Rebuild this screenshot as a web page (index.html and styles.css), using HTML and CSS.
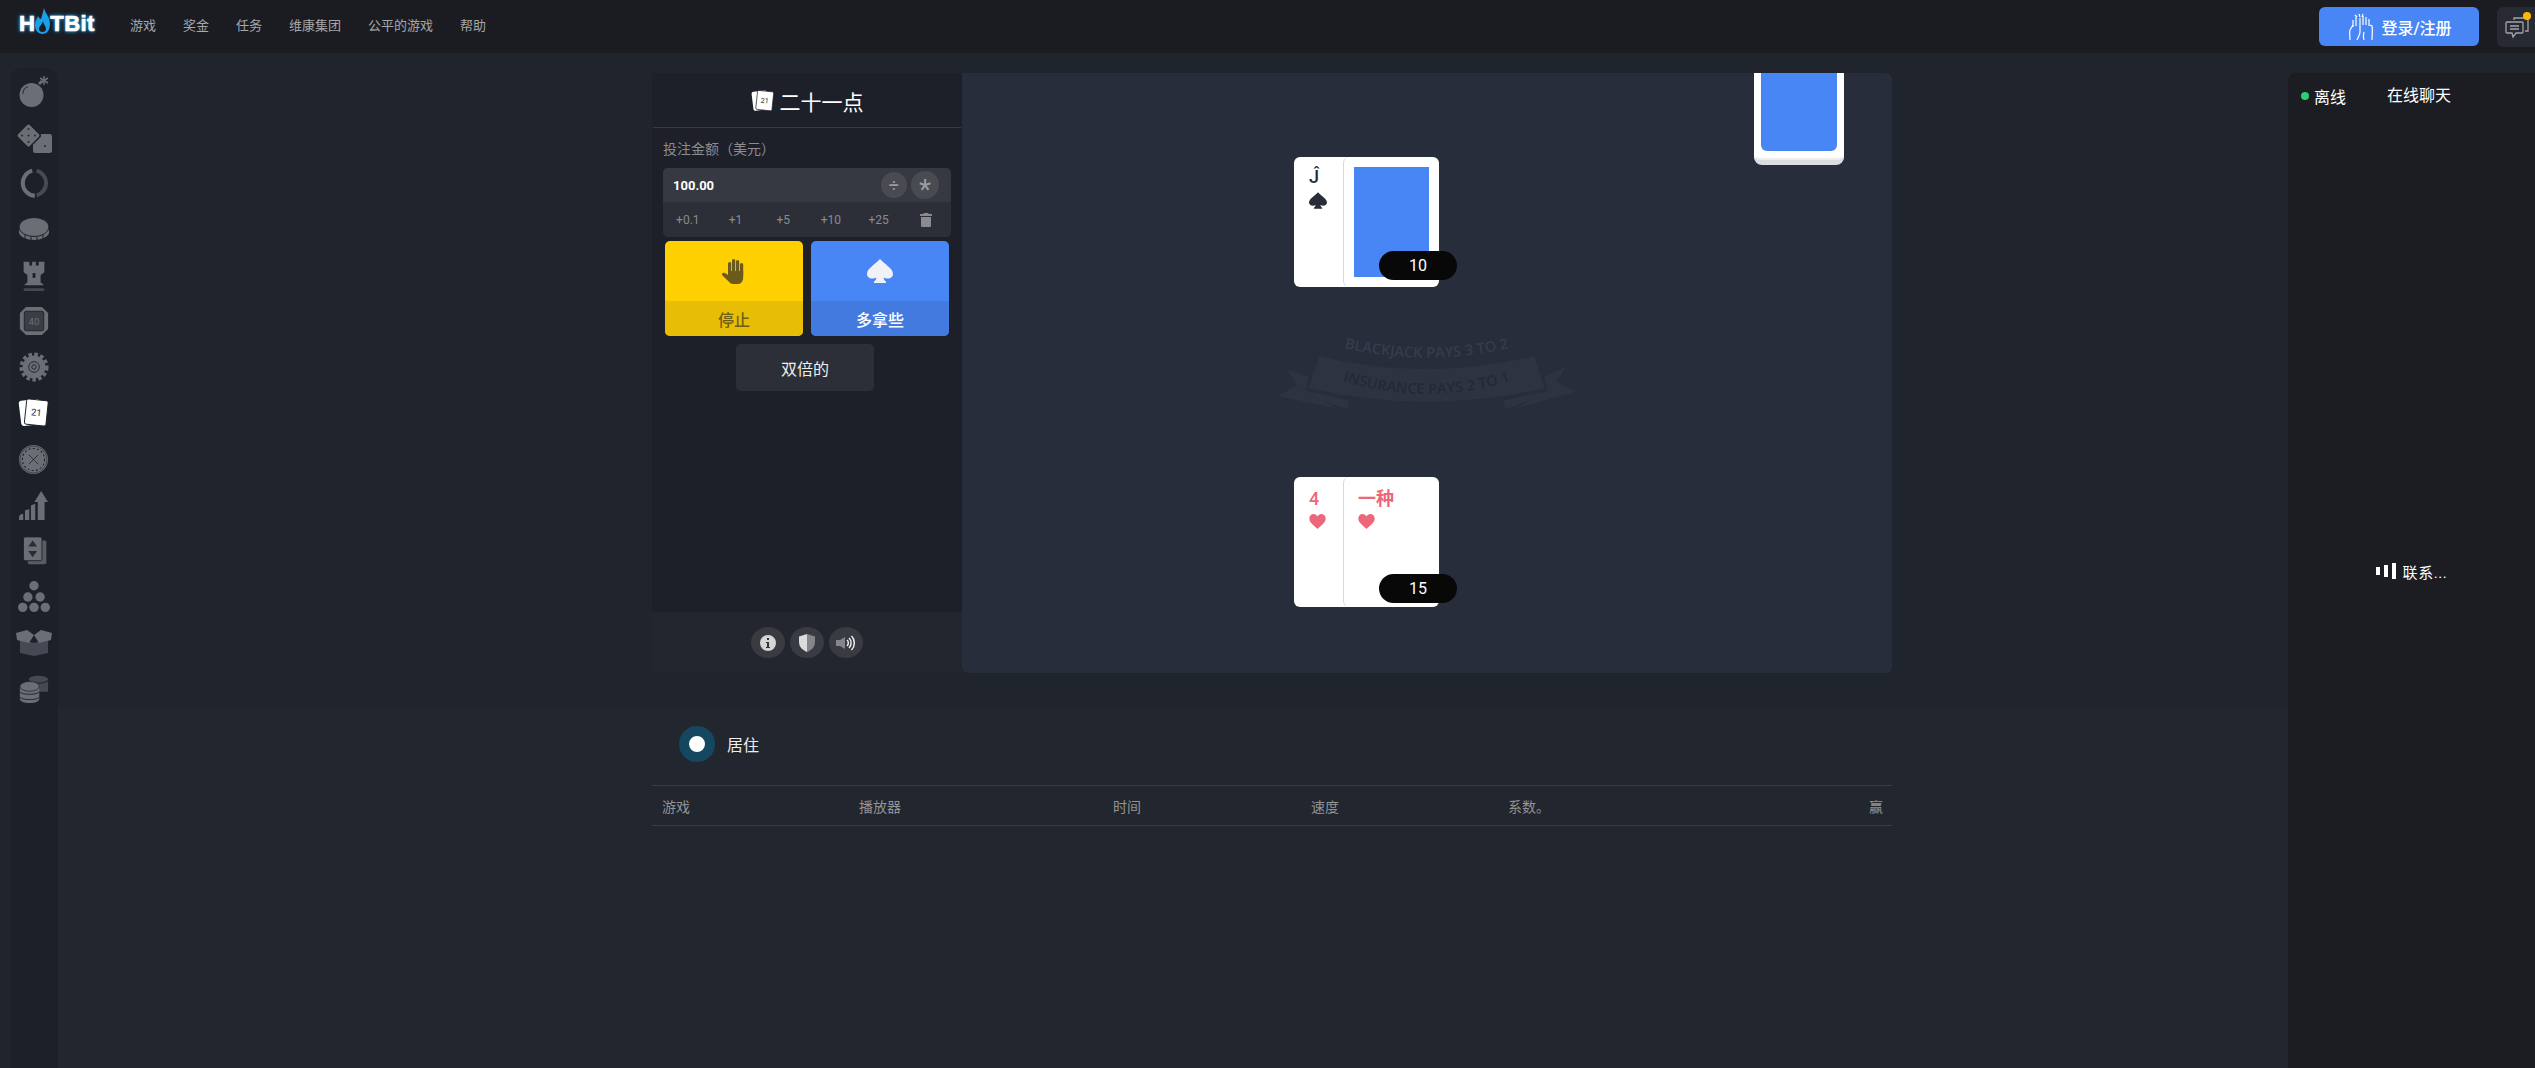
FILE: index.html
```html
<!DOCTYPE html>
<html>
<head>
<meta charset="utf-8">
<title>二十一点</title>
<link rel="stylesheet" href="styles.css">
</head>
<body>
<svg class="defs" width="0" height="0">
    <symbol id="spade" viewBox="0 0 26 24">
        <path d="M13 0C9 5 0 9 0 15c0 4 5 6 9.500 3.500C9.300 20 8.500 21.500 7 22.500V24h12v-1.500c-1.500-1-2.300-2.500-2.500-4C21 21 26 19 26 15 26 9 17 5 13 0z"/>
    </symbol>
    <symbol id="heart" viewBox="0 0 24 22">
        <path d="M12 22C7 17 0 12.500 0 6.500 0 2.500 3 0 6.300 0 8.800 0 11 1.300 12 3.500 13 1.300 15.200 0 17.700 0 21 0 24 2.500 24 6.500 24 12.500 17 17 12 22z"/>
    </symbol>
</svg>

<header class="topbar">
    <div class="logo">H<svg class="logo-flame" width="15" height="26" viewBox="0 0 15 26">
            <path d="M9 0c1 5 6 9 6 16 0 6-3 10-7.500 10S0 22 0 17c0-4 2-6 3-9 1 2 2 3 3 3 1-3 2-7 3-11z" fill="#19a0ea"/>
            <path d="M8 13c0 3 3 5 3 8 0 2-1.500 3-3.500 3S4 23 4 21c0-3 3-4 4-8z" fill="#1b1c22"/>
        </svg>TBit</div>
    <nav class="nav">
        <a>游戏</a>
        <a>奖金</a>
        <a>任务</a>
        <a>维康集团</a>
        <a>公平的游戏</a>
        <a>帮助</a>
    </nav>
    <a class="login">
        <svg width="26" height="28" viewBox="0 0 26 28" fill="none" stroke="#fff" stroke-width="1.200">
            <path d="M2 27c0-5-1-7 0-10l3-5M9 27c1-3 3-5 3-8V5M8 13V4M5 14V7M15 12V3M18 12V4M21 13V6M24 27c0-6 1-10 0-14l-2-1M16 27c-1-3-1-5 0-8"/>
            <path d="M7 2l2 2M11 1l1 3M15 1l-1 3"/>
        </svg>
        登录/注册
    </a>
    <a class="chat-toggle">
        <svg width="26" height="26" viewBox="0 0 26 26" fill="none" stroke="#a3a4a8" stroke-width="1.300">
            <path d="M9 6V4h14v13h-3"/>
            <path d="M2 8h15a1 1 0 0 1 1 1v9a1 1 0 0 1-1 1h-6l-3 4-1-4H2a1 1 0 0 1-1-1V9a1 1 0 0 1 1-1z"/>
            <path d="M5 12h9M5 15h9"/>
        </svg>
        <span class="chat-dot"></span>
    </a>
</header>

<div class="page">
    <aside class="sidebar">
        <a class="side-item">
            <svg width="34" height="34" viewBox="0 0 34 34" fill="#6c6e75">
                <ellipse cx="14.500" cy="21" rx="12" ry="12"/>
                <path d="M21 9l3-3 2 2-3 3z"/>
                <path d="M27 2v9M23 4l8 5M31 4l-8 5" stroke="#6c6e75" stroke-width="1.500"/>
                <path d="M6 20c0-4 2-7 5-7" fill="none" stroke="#24262c" stroke-width="1"/>
            </svg>
        </a>
        <a class="side-item">
            <svg width="34" height="34" viewBox="0 0 34 34" fill="#6c6e75">
                <rect x="16" y="14" width="19" height="19" rx="2.500"/>
                <rect x="2.500" y="6.500" width="18" height="18" rx="2.500" transform="rotate(45 11.500 15.500)" stroke="#1c2029" stroke-width="1.500"/>
                <g fill="#24262c"><circle cx="11.500" cy="9" r="1"/><circle cx="5" cy="15.500" r="1"/><circle cx="18" cy="15.500" r="1"/><circle cx="11.500" cy="22" r="1"/><circle cx="11.500" cy="15.500" r="1"/><circle cx="28" cy="26" r="1"/></g>
            </svg>
        </a>
        <a class="side-item">
            <svg width="30" height="30" viewBox="0 0 34 34" fill="none" stroke-width="4.500">
                <path d="M15 3a14.500 14.500 0 0 0 3 28.500" stroke="#6c6e75"/>
                <path d="M20 31a14.500 14.500 0 0 0 0-28" stroke="#484a52"/>
            </svg>
        </a>
        <a class="side-item">
            <svg width="34" height="34" viewBox="0 0 34 34" fill="#6c6e75">
                <path d="M2 17v4c1 4 8 7 15 7s14-3 15-7v-4z"/>
                <ellipse cx="17" cy="15" rx="15" ry="9.500" stroke="#1c2029" stroke-width="1"/>
                <path d="M8 23v5M14 25v3M20 25v3M26 23v5" stroke="#1c2029" stroke-width="1"/>
            </svg>
        </a>
        <a class="side-item">
            <svg width="32" height="32" viewBox="0 0 34 34" fill="#6c6e75">
                <path d="M6 3h6v4h3V3h4v4h3V3h6v11l-4 3v8l3 2v1H7v-1l3-2v-8l-4-3z"/>
                <rect x="15.500" y="15" width="3" height="5" fill="#1c2029"/>
                <rect x="6" y="31" width="22" height="3" rx="1" fill="#45474f"/>
            </svg>
        </a>
        <a class="side-item">
            <svg width="30" height="30" viewBox="0 0 34 34" fill="none" stroke="#6c6e75">
                <path d="M8 1h18l7 7v18l-7 7H8l-7-7V8z" fill="#6c6e75" stroke="none"/>
                <rect x="6" y="6" width="22" height="22" rx="2" fill="#3b3d45" stroke="#1c2029" stroke-width="1"/>
                <text x="17" y="21" font-size="11" font-family="Roboto, sans-serif" fill="#6c6e75" stroke="none" text-anchor="middle">40</text>
            </svg>
        </a>
        <a class="side-item">
            <svg width="30" height="30" viewBox="0 0 34 34" fill="none">
                <circle cx="17" cy="17" r="13" fill="#6c6e75"/>
                <circle cx="17" cy="17" r="14.500" stroke="#6c6e75" stroke-width="4" stroke-dasharray="4 2.830"/>
                <circle cx="17" cy="17" r="6" stroke="#1c2029" stroke-width="1"/>
                <circle cx="17" cy="17" r="2.500" stroke="#1c2029" stroke-width="1"/>
            </svg>
        </a>
        <a class="side-item">
            <svg width="32" height="32" viewBox="0 0 34 34">
                <rect x="2" y="3" width="22" height="27" rx="3" fill="#fff" transform="rotate(-7 13 16)"/>
                <rect x="8" y="3" width="23" height="27" rx="2" fill="#fff" stroke="#1c2029" stroke-width="1" transform="rotate(6 20 16)"/>
                <text x="19.500" y="20" font-size="10" font-family="Roboto, sans-serif" fill="#24262c" text-anchor="middle" transform="rotate(6 20 16)">21</text>
            </svg>
        </a>
        <a class="side-item">
            <svg width="29" height="29" viewBox="0 0 34 34" fill="none">
                <circle cx="17" cy="17" r="17" fill="#6c6e75"/>
                <circle cx="17" cy="17" r="15.800" stroke="#1c2029" stroke-width=".6"/>
                <circle cx="17" cy="17" r="13" stroke="#1c2029" stroke-width="1.200" stroke-dasharray="2.500 2.500"/>
                <path d="M11.500 11.500l11 11M22.500 11.500l-11 11" stroke="#1c2029" stroke-width=".9"/>
            </svg>
        </a>
        <a class="side-item">
            <svg width="29" height="29" viewBox="0 0 34 34" fill="#6c6e75">
                <path d="M0 34v-3q0-3 3-4h2v7zM7 34V23l5-2v13zM14 34V17l5-2v19zM22 34V13h-4L26 0l8 13h-4v21z"/>
            </svg>
        </a>
        <a class="side-item">
            <svg width="30" height="30" viewBox="0 0 34 34" fill="#6c6e75">
                <rect x="10" y="5" width="21" height="27" rx="2" fill="#5a5c63"/>
                <rect x="5" y="1" width="21" height="27" rx="2" stroke="#1c2029" stroke-width="1"/>
                <path d="M15.500 5l5 7h-10zM15.500 24l5-7h-10z" fill="#2a2c33"/>
            </svg>
        </a>
        <a class="side-item">
            <svg width="32" height="32" viewBox="0 0 34 34" fill="#6c6e75">
                <circle cx="17" cy="5" r="5"/><circle cx="10.500" cy="17" r="5"/><circle cx="23.500" cy="17" r="5"/>
                <circle cx="5" cy="28" r="5"/><circle cx="17" cy="28" r="5"/><circle cx="29" cy="28" r="5"/>
            </svg>
        </a>
        <a class="side-item">
            <svg width="36" height="26" viewBox="0 0 36 26" fill="#6c6e75">
                <path d="M4 9l14 4 14-4v14l-14 3-14-3z" fill="#464953"/>
                <path d="M0 3l11-3 7 5-5 8-12-3zM36 3L25 0l-7 5 5 8 12-3z"/>
            </svg>
        </a>
        <a class="side-item">
            <svg width="30" height="30" viewBox="0 0 34 34">
                <ellipse cx="22" cy="6" rx="11" ry="4" fill="#464953"/>
                <path d="M11 8v12h22V8c-3 4-19 4-22 0z" fill="#464953"/>
                <path d="M1 14v14c0 3 5 5 11 5s11-2 11-5V14z" fill="#6c6e75"/>
                <ellipse cx="12" cy="14" rx="11" ry="5.500" fill="#6c6e75" stroke="#1c2029" stroke-width=".8"/>
                <path d="M1 20c1 4 21 4 22 0M1 26c1 4 21 4 22 0" fill="none" stroke="#1c2029" stroke-width="1"/>
            </svg>
        </a>
    </aside>

    <main class="center">
        <section class="game">
            <div class="panel">
                <div class="panel-body">
                    <h1 class="panel-title">
                        <svg width="24" height="24" viewBox="0 0 34 34">
                            <rect x="2" y="3" width="22" height="27" rx="3" fill="#fff" transform="rotate(-7 13 16)"/>
                            <rect x="8" y="3" width="23" height="27" rx="2" fill="#fff" stroke="#1e2029" stroke-width="1" transform="rotate(6 20 16)"/>
                            <text x="19.500" y="20" font-size="10" font-family="Roboto, sans-serif" fill="#24262c" text-anchor="middle" transform="rotate(6 20 16)">21</text>
                        </svg>
                        二十一点
                    </h1>
                    <div class="bet-label">投注金额（美元）</div>
                    <div class="bet-box">
                        <div class="bet-input">
                            <span class="bet-value">100.00</span>
                            <a class="round-btn">÷</a>
                            <a class="round-btn round-btn-big">*</a>
                        </div>
                        <div class="chips">
                            <a>+0.1</a>
                            <a>+1</a>
                            <a>+5</a>
                            <a>+10</a>
                            <a>+25</a>
                            <a>
                                <svg width="12" height="14" viewBox="0 0 12 14" fill="#8a8b8f">
                                    <path d="M4 0h4l1 1h3v2H0V1h3zM1 4h10v9a1 1 0 0 1-1 1H2a1 1 0 0 1-1-1z"/>
                                </svg>
                            </a>
                        </div>
                    </div>
                    <div class="actions">
                        <a class="action action-stop">
                            <span class="action-icon">
                                <svg width="24" height="25" viewBox="0 0 24 25" fill="#6b5a1a">
                                    <rect x="6" y="3" width="3.200" height="14" rx="1.600"/>
                                    <rect x="10" y="0" width="3.200" height="16" rx="1.600"/>
                                    <rect x="14" y="1" width="3.200" height="15" rx="1.600"/>
                                    <rect x="18" y="4" width="3.200" height="13" rx="1.600"/>
                                    <path d="M6 12h15.200v6c0 4-2 7-5 7h-5c-2 0-3-1-4-2L0 16c-.7-1 1-3 3-2l3 2z"/>
                                </svg>
                            </span>
                            <span class="action-label">停止</span>
                        </a>
                        <a class="action action-hit">
                            <span class="action-icon"><svg class="icon-spade" width="26" height="24"><use href="#spade"/></svg></span>
                            <span class="action-label">多拿些</span>
                        </a>
                    </div>
                    <a class="double">双倍的</a>
                </div>
                <div class="panel-foot">
                    <a class="foot-btn">
                        <svg width="16" height="16" viewBox="0 0 16 16">
                            <circle cx="8" cy="8" r="8" fill="#d5d5d6"/>
                            <path d="M7 3h2v2H7zM6 7h3v5h1v1H6v-1h1V8H6z" fill="#33343a"/>
                        </svg>
                    </a>
                    <a class="foot-btn">
                        <svg width="16" height="18" viewBox="0 0 16 18">
                            <path d="M8 0l8 2.500V8c0 5-3.500 8-8 10z" fill="#85868a"/>
                            <path d="M8 0L0 2.500V8c0 5 3.500 8 8 10z" fill="#dcdcdd"/>
                        </svg>
                    </a>
                    <a class="foot-btn">
                        <svg width="20" height="18" viewBox="0 0 20 18" fill="none">
                            <path d="M0 6h4l5-3v12l-5-3H0z" fill="#85868a"/>
                            <path d="M11 6a4 4 0 0 1 0 6M13 4a7 7 0 0 1 0 10M15.500 2a10 10 0 0 1 0 14" stroke="#eee" stroke-width="1.500"/>
                        </svg>
                    </a>
                </div>
            </div>
            <div class="table">
                <div class="deck">
                    <div class="deck-face"></div>
                </div>
                <div class="hand hand-dealer">
                    <div class="card">
                        <span class="rank">Ĵ</span>
                        <svg class="suit suit-black" width="18" height="17"><use href="#spade"/></svg>
                    </div>
                    <div class="card card-back"><div class="card-blue"></div></div>
                    <span class="score">10</span>
                </div>
                <svg class="banner" width="320" height="100" viewBox="0 0 960 300">
                    <g fill="#2e3341">
                        <path d="M50 148l68 22-10 40 92 55-178-37 60-33z"/>
                        <path d="M890 138l-68 32 10 40-92 55 178-50-58-30z"/>
                        <path d="M120 212l118 30-6 26-100-36zM820 212l-120 30 6 26 100-36z"/>
                        <path d="M145 103c220 55 430 55 650 0l35 105c-240 55-480 55-720 0z" stroke="#272d3a" stroke-width="8"/>
                    </g>
                    <path id="arcTop" d="M222 84Q470 142 718 84" fill="none"/>
                    <path id="arcBottom" d="M210 180Q470 264 730 180" fill="none"/>
                    <text class="banner-text"><textPath href="#arcTop" startOffset="50%" text-anchor="middle">BLACKJACK PAYS 3 TO 2</textPath></text>
                    <text class="banner-text banner-text-dark"><textPath href="#arcBottom" startOffset="50%" text-anchor="middle">INSURANCE PAYS 2 TO 1</textPath></text>
                </svg>
                <div class="hand hand-player">
                    <div class="card card-red">
                        <span class="rank">4</span>
                        <svg class="suit" width="17" height="15"><use href="#heart"/></svg>
                    </div>
                    <div class="card card-red card-top">
                        <span class="rank rank-word">一种</span>
                        <svg class="suit" width="17" height="15"><use href="#heart"/></svg>
                    </div>
                    <span class="score">15</span>
                </div>
            </div>
        </section>

        <section class="live">
            <div class="live-wrap">
                <div class="live-head">
                    <span class="live-dot"></span>
                    <span class="live-title">居住</span>
                </div>
                <div class="live-row">
                    <span>游戏</span>
                    <span>播放器</span>
                    <span>时间</span>
                    <span>速度</span>
                    <span>系数。</span>
                    <span class="live-win">赢</span>
                </div>
            </div>
        </section>
    </main>

    <aside class="chat">
        <div class="chat-head">
            <span class="status"><i></i>离线</span>
            <span class="chat-title">在线聊天</span>
        </div>
        <div class="chat-body">
            <span class="bars"><i></i><i></i><i></i></span>
            <span class="chat-wait">联系...</span>
        </div>
    </aside>
</div>
</body>
</html>
```

FILE: styles.css
```css
* { box-sizing: border-box; }
html, body { height: 100%; }
body {
    margin: 0;
    overflow: hidden;
    background: #20242d;
    color: #fff;
    font-family: Roboto, "Noto Sans CJK SC", sans-serif;
}
a { color: inherit; text-decoration: none; }
.defs { position: absolute; }

/* top bar */
.topbar {
    display: flex;
    align-items: center;
    height: 53px;
    padding: 0 0 5px 19px;
    background: #1b1c22;
}
.logo {
    display: flex;
    align-items: center;
    width: 111px;
    font: bold 22px/24px "Liberation Sans", sans-serif;
    letter-spacing: .4px;
    -webkit-text-stroke: .7px #fff;
    text-shadow: 0 0 3px #1aa3e8, 0 0 4px #1aa3e8;
}
.logo-flame { flex: none; margin: -6px 0 0 0; }
.nav { display: flex; gap: 27px; font-size: 13px; color: #a6a7aa; }
.login {
    display: flex;
    align-items: center;
    justify-content: center;
    gap: 7px;
    width: 160px;
    height: 39px;
    margin-left: auto;
    margin-top: 5px;
    padding-left: 2px;
    background: #4886f6;
    border-radius: 6px;
    font-size: 16px;
    font-weight: 500;
}
.chat-toggle {
    position: relative;
    display: flex;
    align-items: center;
    justify-content: center;
    width: 38px;
    height: 40px;
    margin-left: 18px;
    margin-top: 5px;
    padding-left: 4px;
    background: #272a33;
    border-radius: 6px 0 0 6px;
}
.chat-dot {
    position: absolute;
    top: 5px;
    right: 4px;
    width: 8px;
    height: 8px;
    border-radius: 50%;
    background: #fbb800;
}

/* columns */
.page { display: flex; height: 1015px; }
.sidebar {
    flex: none;
    display: flex;
    flex-direction: column;
    align-items: center;
    width: 48px;
    margin: 15px 0 0 10px;
    background: #1c2029;
    border-radius: 12px 12px 0 0;
}
.side-item {
    flex: none;
    display: flex;
    align-items: center;
    justify-content: center;
    width: 48px;
    height: 46px;
    margin-left: -1px;
}
.side-item svg { display: block; overflow: visible; }
.center { flex: 1; min-width: 0; display: flex; flex-direction: column; padding-top: 20px; }

/* game */
.game {
    display: flex;
    width: 1240px;
    height: 600px;
    margin-left: 594px;
}
.panel {
    flex: none;
    display: flex;
    flex-direction: column;
    width: 310px;
    background: #1e2029;
}
.panel-body { flex: 1; }
.panel-title {
    display: flex;
    align-items: center;
    justify-content: center;
    gap: 5px;
    height: 55px;
    margin: 0 1px;
    padding-top: 2px;
    border-bottom: 1px solid #393b43;
    font-size: 21px;
    font-weight: normal;
}
.bet-label { margin: 12px 0 0 11px; font-size: 14px; line-height: 18px; color: #8b8c90; }
.bet-box {
    margin: 10px 11px 0;
    background: #2c2f38;
    border-radius: 5px;
    overflow: hidden;
}
.bet-input {
    display: flex;
    align-items: center;
    gap: 4px;
    height: 34px;
    padding: 0 12px 0 10px;
    background: #363942;
}
.bet-value { flex: 1; font-size: 13px; font-weight: bold; }
.round-btn {
    display: flex;
    align-items: center;
    justify-content: center;
    width: 26px;
    height: 26px;
    border-radius: 50%;
    background: #494b53;
    color: #9b9c9f;
    font-size: 18px;
}
.round-btn-big { width: 28px; height: 28px; font-size: 28px; line-height: 38px; padding-top: 9px; }
.chips { display: flex; height: 35px; padding: 0 1px; align-items: center; font-size: 12px; color: #8a8b8f; }
.chips a { flex: 1; text-align: center; }
.chips svg { display: block; margin: 0 auto; }
.actions { display: flex; gap: 8px; margin: 4px 13px 0; }
.action {
    display: flex;
    flex-direction: column;
    width: 138px;
    height: 95px;
    border-radius: 5px;
    overflow: hidden;
    font-size: 16px;
    font-weight: 500;
}
.action-icon { display: flex; align-items: center; justify-content: center; height: 60px; }
.action-label { flex: 1; display: flex; align-items: center; justify-content: center; }
.action-stop { background: #ffd000; color: #6e5f17; }
.action-stop .action-label { background: #e8bd06; }
.action-hit { background: #4886f6; }
.action-hit .action-label { background: #437ae0; }
.icon-spade { fill: #f1f2f6; }
.double {
    display: flex;
    align-items: center;
    justify-content: center;
    width: 138px;
    height: 47px;
    margin: 8px 0 0 84px;
    background: #2c2f38;
    border-radius: 5px;
    font-size: 16px;
    color: #eee;
}
.panel-foot {
    display: flex;
    align-items: center;
    justify-content: center;
    gap: 5px;
    height: 61px;
    background: #23262e;
}
.foot-btn {
    display: flex;
    align-items: center;
    justify-content: center;
    width: 34px;
    height: 31px;
    border-radius: 50%;
    background: #393b43;
}

/* table, cards lie on a free canvas */
.table {
    position: relative;
    flex: 1;
    overflow: hidden;
    background: #272d3a;
    border-radius: 0 6px 6px 6px;
}
.deck {
    position: absolute;
    left: 792px;
    top: -40px;
    width: 90px;
    height: 132px;
    padding: 0 7px;
    background: #fff;
    border-radius: 0 0 8px 8px;
    border-bottom: 5px solid #dcdde0;
    box-shadow: inset 0 -2px 0 #eee;
}
.deck-face { height: 118px; background: #4886f6; border-radius: 0 0 6px 6px; }
.hand { position: absolute; left: 332px; display: flex; }
.hand-dealer { top: 84px; }
.hand-player { top: 404px; }
.card {
    position: relative;
    width: 96px;
    height: 130px;
    padding: 8px 0 0 15px;
    background: #fff;
    border-radius: 6px;
    color: #282d39;
}
.card + .card { margin-left: -47px; border-left: 1px solid #d9d9dc; }
.rank { display: block; font-size: 18px; font-weight: 500; line-height: 24px; }
.rank-word { font-weight: bold; }
.card-top { padding-left: 14px; }
.suit { display: block; margin-top: 3px; fill: currentColor; }
.card-red { color: #ee6679; }
.card-red .rank { margin-top: 2px; }
.card-back { padding: 10px 0 0 10px; }
.card-blue { width: 75px; height: 110px; background: #4886f6; }
.score {
    position: absolute;
    left: 85px;
    top: 94px;
    width: 78px;
    height: 29px;
    border-radius: 15px;
    background: #080808;
    font-size: 16px;
    line-height: 29px;
    text-align: center;
}
.hand-player .score { top: 97px; }
.banner { position: absolute; left: 308px; top: 247px; }
.banner-text { font: 600 44px "Open Sans", sans-serif; fill: #363c4b; }
.banner-text-dark { fill: #242935; }

/* live list */
.live {
    flex: 1;
    margin-top: 34px;
    background: #22262e;
}
.live-wrap { width: 1240px; margin-left: 594px; }
.live-head { display: flex; align-items: center; height: 78px; padding: 0 0 4px 27px; }
.live-dot {
    width: 36px;
    height: 36px;
    border: 10px solid #154860;
    border-radius: 50%;
    background: #fff;
}
.live-title { margin-left: 12px; font-size: 16px; color: #eee; }
.live-row {
    display: grid;
    grid-template-columns: 197px 254px 198px 197px 1fr auto;
    align-items: center;
    height: 41px;
    padding: 0 9px 0 10px;
    border-top: 1px solid #383b43;
    border-bottom: 1px solid #383b43;
    font-size: 14px;
    color: #929396;
}

/* chat */
.chat {
    flex: none;
    display: flex;
    flex-direction: column;
    width: 247px;
    margin-top: 20px;
    background: #1b1d23;
    border-radius: 8px 0 0 0;
}
.chat-head { display: flex; align-items: center; height: 42px; padding: 0 0 0 13px; font-size: 16px; }
.status { display: flex; align-items: center; gap: 5px; width: 86px; padding-top: 4px; }
.status i { width: 8px; height: 8px; border-radius: 50%; background: #2ecc71; }
.chat-body {
    display: flex;
    align-items: center;
    justify-content: center;
    gap: 7px;
    height: 912px;
    font-size: 15px;
}
.chat-wait { letter-spacing: .6px; }
.bars { display: flex; align-items: center; gap: 4px; }
.bars i { width: 4px; background: #fff; }
.bars i:nth-child(1) { height: 8px; }
.bars i:nth-child(2) { height: 12px; }
.bars i:nth-child(3) { height: 16px; }
```
